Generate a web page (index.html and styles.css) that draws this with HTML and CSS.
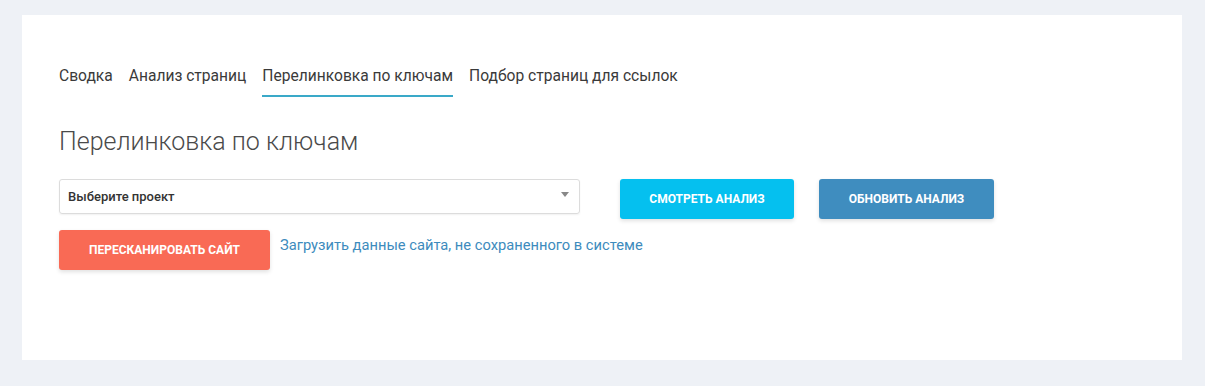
FILE: index.html
```html
<!DOCTYPE html>
<html lang="ru">
<head>
    <meta charset="UTF-8">
    <meta name="viewport" content="width=device-width, initial-scale=1.0">
    <title>Перелинковка по ключам</title>
    <link rel="stylesheet" href="styles.css">
</head>
<body>
    <div class="page-card">
        <!-- вкладки -->
        <ul class="tabs">
            <li><a href="#">Сводка</a></li>
            <li><a href="#">Анализ страниц</a></li>
            <li class="active"><a href="#">Перелинковка по ключам</a></li>
            <li><a href="#">Подбор страниц для ссылок</a></li>
        </ul>

        <h1 class="page-title">Перелинковка по ключам</h1>

        <div class="form-row">
            <div class="select-box">
                <span>Выберите проект</span>
                <span class="select-arrow"></span>
            </div>
            <button class="btn btn-cyan">Смотреть анализ</button>
            <button class="btn btn-blue">Обновить анализ</button>
        </div>

        <div class="form-row second">
            <button class="btn btn-red">Пересканировать сайт</button>
            <a href="#" class="upload-link">Загрузить данные сайта, не сохраненного в системе</a>
        </div>
    </div>
</body>
</html>
```

FILE: styles.css
```css
* {
    margin: 0;
    padding: 0;
    box-sizing: border-box;
}

body {
    font-family: 'Roboto', 'Liberation Sans', sans-serif;
    background: #eef1f6;
    color: #333;
    padding: 15px 23px 26px 22px;
}

.page-card {
    background: #fff;
    height: 345px;
    padding: 51px 37px 0;
}

/* вкладки */
.tabs {
    list-style: none;
    display: flex;
    gap: 16px;
}

.tabs a {
    display: block;
    font-size: 15.6px;
    color: #3a3a3a;
    text-decoration: none;
    padding-bottom: 9px;
    border-bottom: 2px solid transparent;
    line-height: 20px;
}

.tabs li.active a {
    border-bottom-color: #3aa9c8;
}

.page-title {
    font-size: 25px;
    font-weight: 300;
    color: #4a4a4a;
    margin-top: 31px;
    line-height: 28px;
}

.form-row {
    display: flex;
    align-items: flex-start;
    margin-top: 23px;
}

.form-row.second {
    margin-top: 11px;
    align-items: center;
}

.select-box {
    width: 521px;
    height: 35px;
    border: 1px solid #dcdcdc;
    border-radius: 3px;
    box-shadow: 0 1px 2px rgba(0, 0, 0, 0.06);
    display: flex;
    align-items: center;
    justify-content: space-between;
    padding: 0 10px 0 8px;
    font-size: 13px;
    font-weight: 500;
    color: #333;
    margin-right: 40px;
}

.select-arrow {
    width: 0;
    height: 0;
    border-left: 4px solid transparent;
    border-right: 4px solid transparent;
    border-top: 5px solid #888;
    margin-top: -4px;
}

.btn {
    height: 40px;
    border: none;
    border-radius: 3px;
    color: #fff;
    font-family: 'Roboto', 'Liberation Sans', sans-serif;
    font-size: 12px;
    font-weight: bold;
    text-transform: uppercase;
    cursor: pointer;
    box-shadow: 0 2px 4px rgba(0, 0, 0, 0.12);
}

.btn-cyan {
    width: 174px;
    background: #05c0ef;
    margin-right: 25px;
}

.btn-blue {
    width: 175px;
    background: #3f8dbf;
}

.btn-red {
    width: 211px;
    background: #f96a55;
    margin-right: 10px;
}

.upload-link {
    font-size: 14.7px;
    color: #3d8bbd;
    text-decoration: none;
    margin-top: -10px;
}
```
